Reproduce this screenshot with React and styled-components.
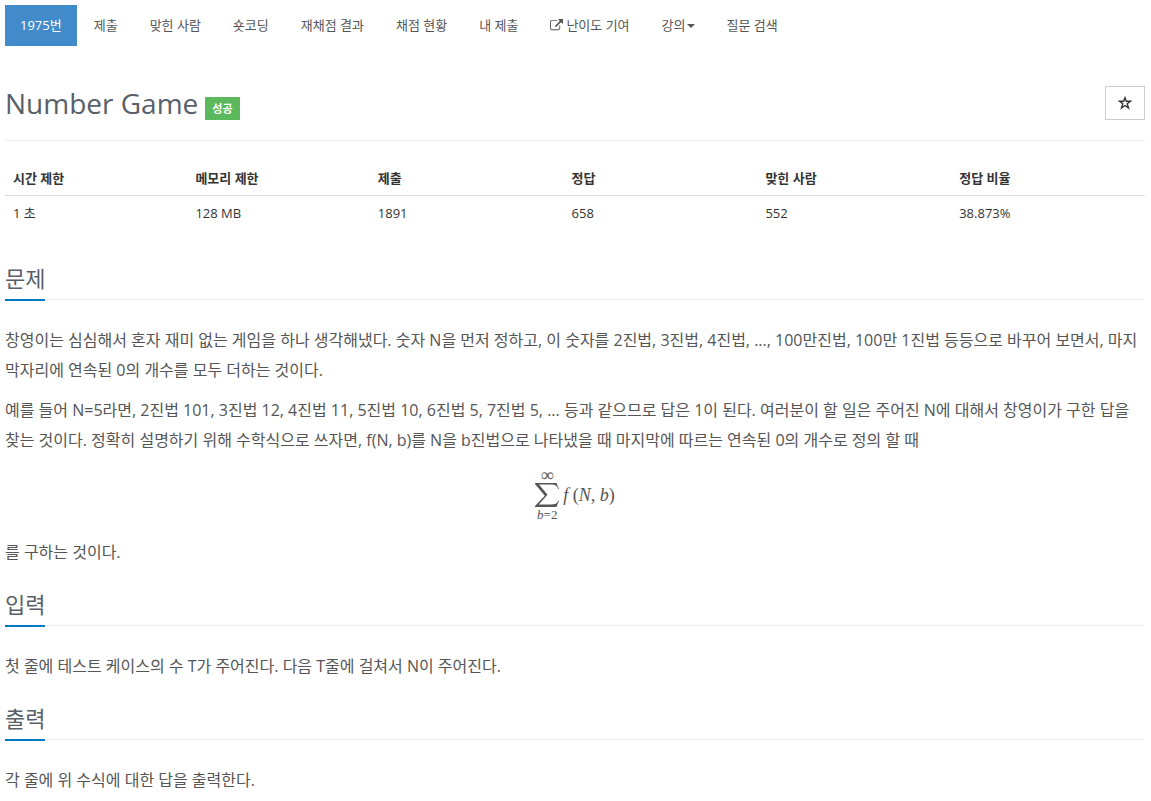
import React from 'react';
import styled, { createGlobalStyle } from 'styled-components';

const tabs = [
    { label: '1975번', active: true },
    { label: '제출' },
    { label: '맞힌 사람' },
    { label: '숏코딩' },
    { label: '재채점 결과' },
    { label: '채점 현황' },
    { label: '내 제출' },
    { label: '난이도 기여', external: true },
    { label: '강의', dropdown: true },
    { label: '질문 검색' },
];

const info = [
    { name: '시간 제한', value: '1 초', width: '16%' },
    { name: '메모리 제한', value: '128 MB', width: '16%' },
    { name: '제출', value: '1891', width: '17%' },
    { name: '정답', value: '658', width: '17%' },
    { name: '맞힌 사람', value: '552', width: '17%' },
    { name: '정답 비율', value: '38.873%', width: '17%' },
];

function ExternalIcon() {
    return (
        <svg width="13" height="13" viewBox="0 0 1792 1792" fill="currentColor" aria-hidden="true">
            <path d="M1408 928v320q0 119-84.500 203.500t-203.500 84.500h-832q-119 0-203.500-84.500t-84.500-203.500v-832q0-119 84.500-203.500t203.500-84.500h704q14 0 23 9t9 23v64q0 14-9 23t-23 9h-704q-66 0-113 47t-47 113v832q0 66 47 113t113 47h832q66 0 113-47t47-113v-320q0-14 9-23t23-9h64q14 0 23 9t9 23zm384-864v512q0 26-19 45t-45 19-45-19l-176-176-652 652q-10 10-23 10t-23-10l-114-114q-10-10-10-23t10-23l652-652-176-176q-19-19-19-45t19-45 45-19h512q26 0 45 19t19 45z" />
        </svg>
    );
}

function StarIcon() {
    return (
        <svg width="14" height="14" viewBox="0 0 14 14" fill="none" stroke="currentColor" strokeWidth="1.4" aria-hidden="true">
            <path d="M7 1.800L8.300 5.300H12.400L9.200 7.800L10.500 12L7 9.500L3.500 12L4.800 7.800L1.600 5.300H5.700Z" />
        </svg>
    );
}

function Formula() {
    return (
        <FormulaRow>
            <Sum>
                <Limit $infinity>∞</Limit>
                <svg width="24" height="24" viewBox="0 0 24 24" fill="currentColor" aria-hidden="true">
                    <path d="M0 0H21.500L24 6H23.200C22.200 2.500 20 1.500 16 1.500H4L12.500 11.800L3.800 21.500H16C20 21.500 22.200 20.500 23.200 17.500H24L21.500 24H0V23L9.800 12.800L0 1Z" />
                </svg>
                <Limit>
                    <i>b</i>=2
                </Limit>
            </Sum>
            <span>
                <i>f</i> (<i>N</i>, <i>b</i>)
            </span>
        </FormulaRow>
    );
}

function Section({ title, children }) {
    return (
        <section>
            <Headline>
                <h2>{title}</h2>
            </Headline>
            <Description>{children}</Description>
        </section>
    );
}

function App() {
    return (
        <>
            <GlobalStyle />
            <Container>
                <nav>
                    <TabList>
                        {tabs.map((tab) => (
                            <li key={tab.label}>
                                <TabLink href="#" $active={tab.active}>
                                    {tab.external && <ExternalIcon />}
                                    {tab.label}
                                    {tab.dropdown && <Caret />}
                                </TabLink>
                            </li>
                        ))}
                    </TabList>
                </nav>

                <PageHeader>
                    <TitleGroup>
                        <Title>Number Game</Title>
                        <Label>성공</Label>
                    </TitleGroup>
                    <StarButton type="button" aria-label="즐겨찾기">
                        <StarIcon />
                    </StarButton>
                </PageHeader>

                <InfoTable>
                    <thead>
                        <tr>
                            {info.map((item) => (
                                <InfoHead key={item.name} scope="col" $width={item.width}>
                                    {item.name}
                                </InfoHead>
                            ))}
                        </tr>
                    </thead>
                    <tbody>
                        <tr>
                            {info.map((item) => (
                                <InfoCell key={item.name}>{item.value}</InfoCell>
                            ))}
                        </tr>
                    </tbody>
                </InfoTable>

                <Section title="문제">
                    <p>
                        창영이는 심심해서 혼자 재미 없는 게임을 하나 생각해냈다. 숫자 N을 먼저 정하고, 이 숫자를 2진법, 3진법,
                        4진법, ..., 100만진법, 100만 1진법 등등으로 바꾸어 보면서, 마지막자리에 연속된 0의 개수를 모두 더하는
                        것이다.
                    </p>
                    <p>
                        예를 들어 N=5라면, 2진법 101, 3진법 12, 4진법 11, 5진법 10, 6진법 5, 7진법 5, ... 등과 같으므로 답은
                        1이 된다. 여러분이 할 일은 주어진 N에 대해서 창영이가 구한 답을 찾는 것이다. 정확히 설명하기 위해
                        수학식으로 쓰자면, f(N, b)를 N을 b진법으로 나타냈을 때 마지막에 따르는 연속된 0의 개수로 정의 할 때
                    </p>
                    <Formula />
                    <p>를 구하는 것이다.</p>
                </Section>

                <Section title="입력">
                    <p>첫 줄에 테스트 케이스의 수 T가 주어진다. 다음 T줄에 걸쳐서 N이 주어진다.</p>
                </Section>

                <Section title="출력">
                    <p>각 줄에 위 수식에 대한 답을 출력한다.</p>
                </Section>
            </Container>
        </>
    );
}

const GlobalStyle = createGlobalStyle`
    * {
        box-sizing: border-box;
    }
    body {
        margin: 0;
        background: #fff;
        color: #333;
        font-family: 'Open Sans', 'Noto Sans CJK KR', sans-serif;
        font-size: 13px;
        line-height: 20px;
    }
`;

const Container = styled.main`
    padding: 5px 6px 0 5px;
`;

const TabList = styled.ul`
    display: flex;
    gap: 2px;
    margin: 0;
    padding: 0;
    list-style: none;
`;

const TabLink = styled.a`
    display: flex;
    align-items: center;
    padding: 10px 15px;
    line-height: 21px;
    white-space: nowrap;
    text-decoration: none;
    color: ${({ $active }) => ($active ? '#fff' : '#555')};
    background: ${({ $active }) => ($active ? '#428bca' : 'transparent')};

    svg {
        margin-right: 3px;
    }
`;

const Caret = styled.span`
    margin-left: 1px;
    border-top: 4px solid currentColor;
    border-left: 4px solid transparent;
    border-right: 4px solid transparent;
`;

const PageHeader = styled.header`
    display: flex;
    justify-content: space-between;
    align-items: flex-start;
    margin-top: 40px;
    padding-bottom: 20px;
    border-bottom: 1px solid #eee;
`;

const TitleGroup = styled.div`
    display: flex;
    align-items: flex-end;
    gap: 7px;
`;

const Title = styled.h1`
    margin: 0;
    font-size: 28px;
    font-weight: 400;
    line-height: 34px;
    color: #585f69;
`;

const Label = styled.span`
    padding: 0 7px;
    font-size: 11px;
    font-weight: 700;
    line-height: 23px;
    color: #fff;
    background: #5cb85c;
`;

const StarButton = styled.button`
    display: flex;
    align-items: center;
    justify-content: center;
    width: 40px;
    height: 34px;
    padding: 0;
    border: 1px solid #ccc;
    background: #fff;
    color: #333;
`;

const InfoTable = styled.table`
    width: 100%;
    margin: 19px 0 31px;
    table-layout: fixed;
    border-collapse: collapse;
`;

const InfoHead = styled.th`
    width: ${({ $width }) => $width};
    padding: 8px 8px 7px;
    border-bottom: 1px solid #ddd;
    text-align: left;
    font-weight: 700;
`;

const InfoCell = styled.td`
    padding: 7px 8px 8px;
`;

const Headline = styled.div`
    display: flex;
    margin: 21px 0 24px;
    background: linear-gradient(to right, #dde2e8 50%, transparent 50%) 0 37px / 2px 1px repeat-x;

    h2 {
        margin: 0;
        padding-bottom: 4px;
        border-bottom: 2px solid #0076c0;
        font-size: 22px;
        font-weight: 400;
        line-height: 33px;
        color: #585f69;
    }
`;

const Description = styled.div`
    font-size: 16px;
    line-height: 30px;
    color: #555;

    p {
        margin: 0 0 10px;
    }
`;

const FormulaRow = styled.div`
    display: flex;
    justify-content: center;
    align-items: center;
    gap: 4px;
    margin: 15px 0 17px;
    font-family: 'Liberation Serif', serif;
    font-size: 18px;
    line-height: 20px;
`;

const Sum = styled.span`
    display: flex;
    flex-direction: column;
    align-items: center;
    gap: 2px;
`;

const Limit = styled.span`
    font-size: ${({ $infinity }) => ($infinity ? '18px' : '13px')};
    line-height: 11px;
`;

export default App;
